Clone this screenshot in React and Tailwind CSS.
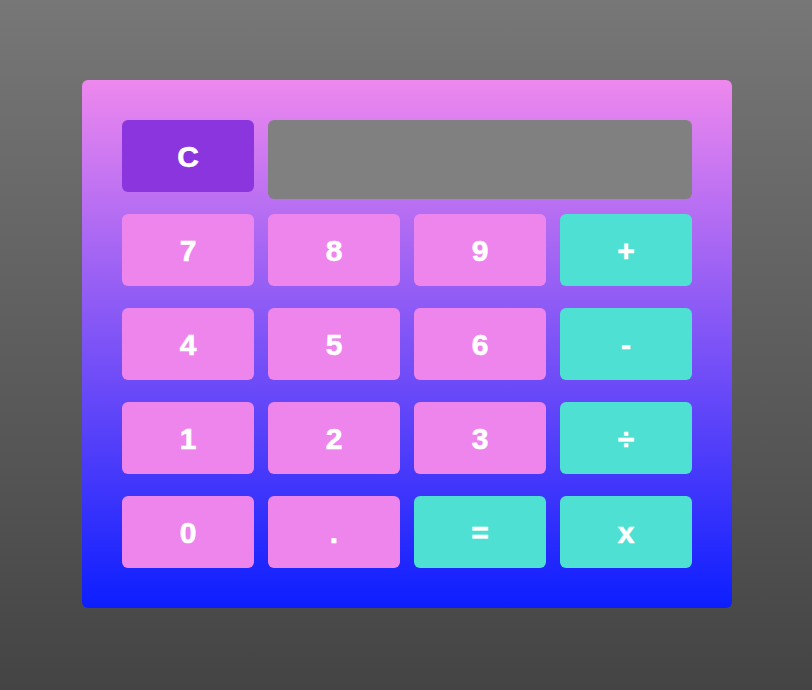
export default function App() {
  const rows = [
    ['7', '8', '9', '+'],
    ['4', '5', '6', '-'],
    ['1', '2', '3', '÷'],
    ['0', '.', '=', 'x'],
  ]
  const ops = ['+', '-', '÷', 'x', '=']

  return (
    <div className="w-[812px] h-[690px] bg-linear-to-b/srgb from-[#777777] to-[#444444] pt-[80px] pl-[82px] font-['Liberation_Sans',Arial,sans-serif]">
      <div className="w-[650px] h-[528px] rounded-md bg-linear-to-b/srgb from-[#ee88ee] to-[#0c1eff] p-[40px]">
        <div className="flex items-start gap-[14px]">
          <button className="w-[132px] h-[72px] rounded-md bg-[#8a35de] text-white text-[30px] font-bold [-webkit-text-stroke:0.6px_#fff]">C</button>
          <div className="w-[424px] h-[79px] rounded-md bg-[#808080]"></div>
        </div>
        <div className="mt-[15px] grid grid-cols-[repeat(4,132px)] gap-x-[14px] gap-y-[22px]">
          {rows.flat().map((k) => (
            <button
              key={k}
              className={`h-[72px] rounded-md text-white text-[30px] font-bold [-webkit-text-stroke:0.6px_#fff] ${ops.includes(k) ? 'bg-[#4de0d3]' : 'bg-[#ee85ec]'}`}
            >
              {k}
            </button>
          ))}
        </div>
      </div>
    </div>
  )
}
